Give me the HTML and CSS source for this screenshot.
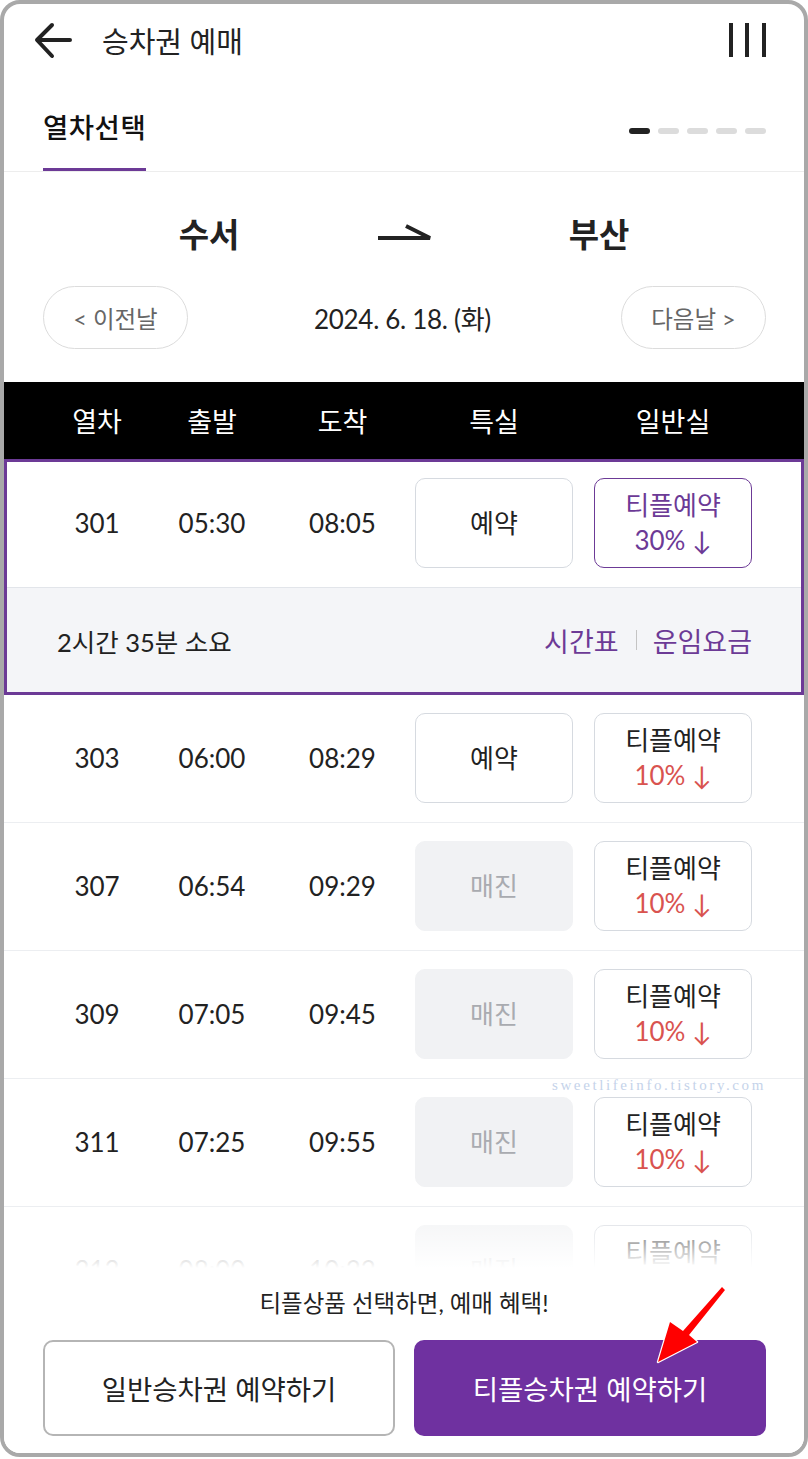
FILE: index.html
```html
<!DOCTYPE html>
<html lang="ko">
<head>
  <meta charset="UTF-8">
  <meta name="viewport" content="width=device-width, initial-scale=1.0">
  <title>승차권 예매</title>
  <link rel="stylesheet" href="styles.css">
</head>
<body>
  <div class="phone">
    <!-- 상단 바 -->
    <header class="topbar">
      <svg class="back" viewBox="0 0 40 40">
        <path d="M5 20 H37 M19 5 L4 20 L19 36" />
      </svg>
      <h1 class="title">승차권 예매</h1>
      <svg class="menu" viewBox="0 0 40 40">
        <path d="M4 3 V37 M20 3 V37 M37 3 V37" />
      </svg>
    </header>

    <div class="tabs">
      <div class="tab">열차선택</div>
      <div class="steps">
        <span class="on"></span><span></span><span></span><span></span><span></span>
      </div>
    </div>

    <div class="route">
      <span>수서</span>
      <svg class="route-arrow" viewBox="0 0 56 34">
        <path d="M2 18 H54 L30 6" />
      </svg>
      <span>부산</span>
    </div>

    <div class="date-row">
      <button class="day-btn">&lt; 이전날</button>
      <div class="date">2024. 6. 18. (화)</div>
      <button class="day-btn">다음날 &gt;</button>
    </div>

    <div class="list">
      <div class="list-head cols">
        <span>열차</span>
        <span>출발</span>
        <span>도착</span>
        <span>특실</span>
        <span class="last">일반실</span>
      </div>

      <div class="train selected">
        <div class="train-main cols">
          <span>301</span>
          <span>05:30</span>
          <span>08:05</span>
          <div class="seat">예약</div>
          <div class="seat tple last">티플예약<span class="rate">30% ↓</span></div>
        </div>
        <div class="train-info">
          <span>2시간 35분 소요</span>
          <div class="links">
            <a>시간표</a><i class="bar"></i><a>운임요금</a>
          </div>
        </div>
      </div>

      <div id="rows"></div>
    </div>

    <footer class="bottom">
      <p class="notice">티플상품 선택하면, 예매 혜택!</p>
      <div class="actions">
        <button class="act">일반승차권 예약하기</button>
        <button class="act primary">티플승차권 예약하기</button>
      </div>
    </footer>

    <div class="watermark">sweetlifeinfo.tistory.com</div>

    <!-- 빨간 화살표 -->
    <svg class="pointer" viewBox="0 0 95 95">
      <path d="M82 7 L85 10 L49 55 L57 62 L18 82 L30 42 L43 51 Z" />
    </svg>
  </div>

  <script>
    const kereta = [
      { no: '303', dep: '06:00', arr: '08:29', soldout: false },
      { no: '307', dep: '06:54', arr: '09:29', soldout: true },
      { no: '309', dep: '07:05', arr: '09:45', soldout: true },
      { no: '311', dep: '07:25', arr: '09:55', soldout: true },
      { no: '313', dep: '08:00', arr: '10:22', soldout: true }
    ];

    const rows = document.getElementById('rows');
    kereta.forEach(t => {
      const row = document.createElement('div');
      row.className = 'train cols';
      row.innerHTML = `
        <span>${t.no}</span>
        <span>${t.dep}</span>
        <span>${t.arr}</span>
        ${t.soldout ? '<div class="seat soldout">매진</div>' : '<div class="seat">예약</div>'}
        <div class="seat tple last">티플예약<span class="rate">10% ↓</span></div>
      `;
      rows.appendChild(row);
    });
  </script>
</body>
</html>
```

FILE: styles.css
```css
  body {
    margin: 0;
    background: #fff;
    font-family: Lato, "Noto Sans CJK KR", sans-serif;
    color: #222;
  }
  button {
    font-family: inherit;
    cursor: pointer;
  }
  .phone {
    position: relative;
    display: flex;
    flex-direction: column;
    height: 1457px;
    box-sizing: border-box;
    border: 4px solid #a9a9a9;
    border-radius: 20px;
    overflow: hidden;
    background: #fff;
  }

  /* header */
  .topbar {
    display: flex;
    align-items: center;
    height: 72px;
    flex: none;
    padding: 0 37px 0 29px;
  }
  .topbar svg {
    width: 40px;
    height: 40px;
    fill: none;
    stroke: #222;
    stroke-width: 4;
    stroke-linecap: round;
    stroke-linejoin: round;
  }
  .title {
    margin: 0 0 0 29px;
    font-size: 29px;
    font-weight: 400;
    flex: 1;
  }
  .menu path {
    stroke-linecap: butt;
  }

  .tabs {
    display: flex;
    justify-content: space-between;
    align-items: flex-start;
    flex: none;
    padding: 0 38px 0 39px;
    border-bottom: 1px solid #ededed;
  }
  .tab {
    padding: 34px 0 22px;
    line-height: 36px;
    font-size: 27.5px;
    font-weight: 500;
    color: #111;
    border-bottom: 3px solid #6c3a96;
    letter-spacing: 0.5px;
  }
  .steps {
    display: flex;
    gap: 8px;
    margin-top: 52px;
  }
  .steps span {
    width: 21px;
    height: 6px;
    border-radius: 3px;
    background: #dcdcdc;
  }
  .steps span.on {
    background: #222;
  }

  .route {
    display: grid;
    grid-template-columns: repeat(3, 195px);
    justify-content: center;
    justify-items: center;
    align-items: center;
    height: 40px;
    margin: 37px 0 37px;
    font-size: 33px;
    font-weight: 700;
    flex: none;
  }
  .route-arrow {
    width: 56px;
    height: 34px;
    margin-top: 8px;
    fill: none;
    stroke: #222;
    stroke-width: 4;
  }

  .date-row {
    display: flex;
    justify-content: space-between;
    align-items: center;
    padding: 0 38px 0 39px;
    flex: none;
  }
  .day-btn {
    width: 145px;
    height: 63px;
    border: 1.5px solid #dcdcdc;
    border-radius: 32px;
    background: #fff;
    font-size: 23.5px;
    color: #666;
  }
  .date {
    font-size: 26px;
    letter-spacing: -0.3px;
    padding-right: 4px;
  }

  /* list */
  .list {
    flex: 1;
    overflow: hidden;
    margin-top: 33px;
  }
  .cols {
    display: grid;
    grid-template-columns: 114px 116px 145px 158px 179px;
    align-items: center;
    justify-items: center;
    padding-left: 36px;
  }
  .cols .last {
    justify-self: end;
    width: 158px;
    box-sizing: border-box;
    text-align: center;
  }
  .list-head {
    height: 77px;
    background: #000;
    color: #fff;
    font-size: 27px;
  }
  .train {
    font-size: 26px;
    padding: 18px 0 19px 36px;
    border-bottom: 1px solid #eceef1;
  }
  .train.selected {
    display: block;
    padding: 0;
    border: 3px solid #6c3a96;
  }
  .train-main {
    padding: 16px 0 19px 33px;
  }
  .train-info {
    display: flex;
    justify-content: space-between;
    align-items: center;
    height: 104px;
    padding: 0 49px 0 50px;
    background: #f4f5f8;
    border-top: 1px solid #e2e5ea;
    font-size: 25.5px;
  }
  .links {
    display: flex;
    align-items: center;
    font-size: 27px;
    color: #6c3a96;
  }
  .bar {
    width: 1px;
    height: 20px;
    margin: 0 16px 0 17px;
    background: #c4c4c4;
  }

  .seat {
    display: flex;
    flex-direction: column;
    align-items: center;
    justify-content: center;
    width: 158px;
    height: 90px;
    box-sizing: border-box;
    border: 1.5px solid #d6dae0;
    border-radius: 10px;
    font-size: 26px;
    line-height: 35px;
    justify-self: start;
  }
  .seat.last {
    justify-self: end;
  }
  .seat.soldout {
    background: #f1f2f4;
    border-color: #f1f2f4;
    color: #a9abb0;
  }
  .seat .rate {
    color: #d9534f;
  }
  .selected .seat.tple {
    border-color: #6c3a96;
    color: #6c3a96;
  }
  .selected .seat .rate {
    color: #6c3a96;
  }

  /* footer */
  .bottom {
    position: relative;
    flex: none;
    height: 185px;
    box-sizing: border-box;
    padding-top: 22px;
    background: #fff;
  }
  .bottom::before {
    content: "";
    position: absolute;
    left: 0;
    right: 0;
    top: -60px;
    height: 60px;
    background: linear-gradient(rgba(255,255,255,0.1), #fff);
  }
  .notice {
    margin: 0;
    text-align: center;
    font-size: 23.5px;
    line-height: 26px;
  }
  .actions {
    display: flex;
    gap: 19px;
    margin-top: 24px;
    padding: 0 38px 0 39px;
  }
  .act {
    flex: 1;
    height: 96px;
    border: 2px solid #b5b5b5;
    border-radius: 10px;
    background: #fff;
    color: #222;
    font-size: 27.5px;
  }
  .act.primary {
    background: #6f31a0;
    border-color: #6f31a0;
    color: #fff;
  }

  .watermark {
    position: absolute;
    right: 38px;
    top: 1073px;
    font-family: "Liberation Serif", serif;
    font-size: 15px;
    letter-spacing: 2.6px;
    color: #c5d3ea;
  }
  .pointer {
    position: absolute;
    left: 636px;
    top: 1276px;
    width: 95px;
    height: 95px;
    fill: #f00;
    stroke: #fff;
    stroke-width: 2.5;
    stroke-linejoin: round;
    paint-order: stroke;
  }
```
